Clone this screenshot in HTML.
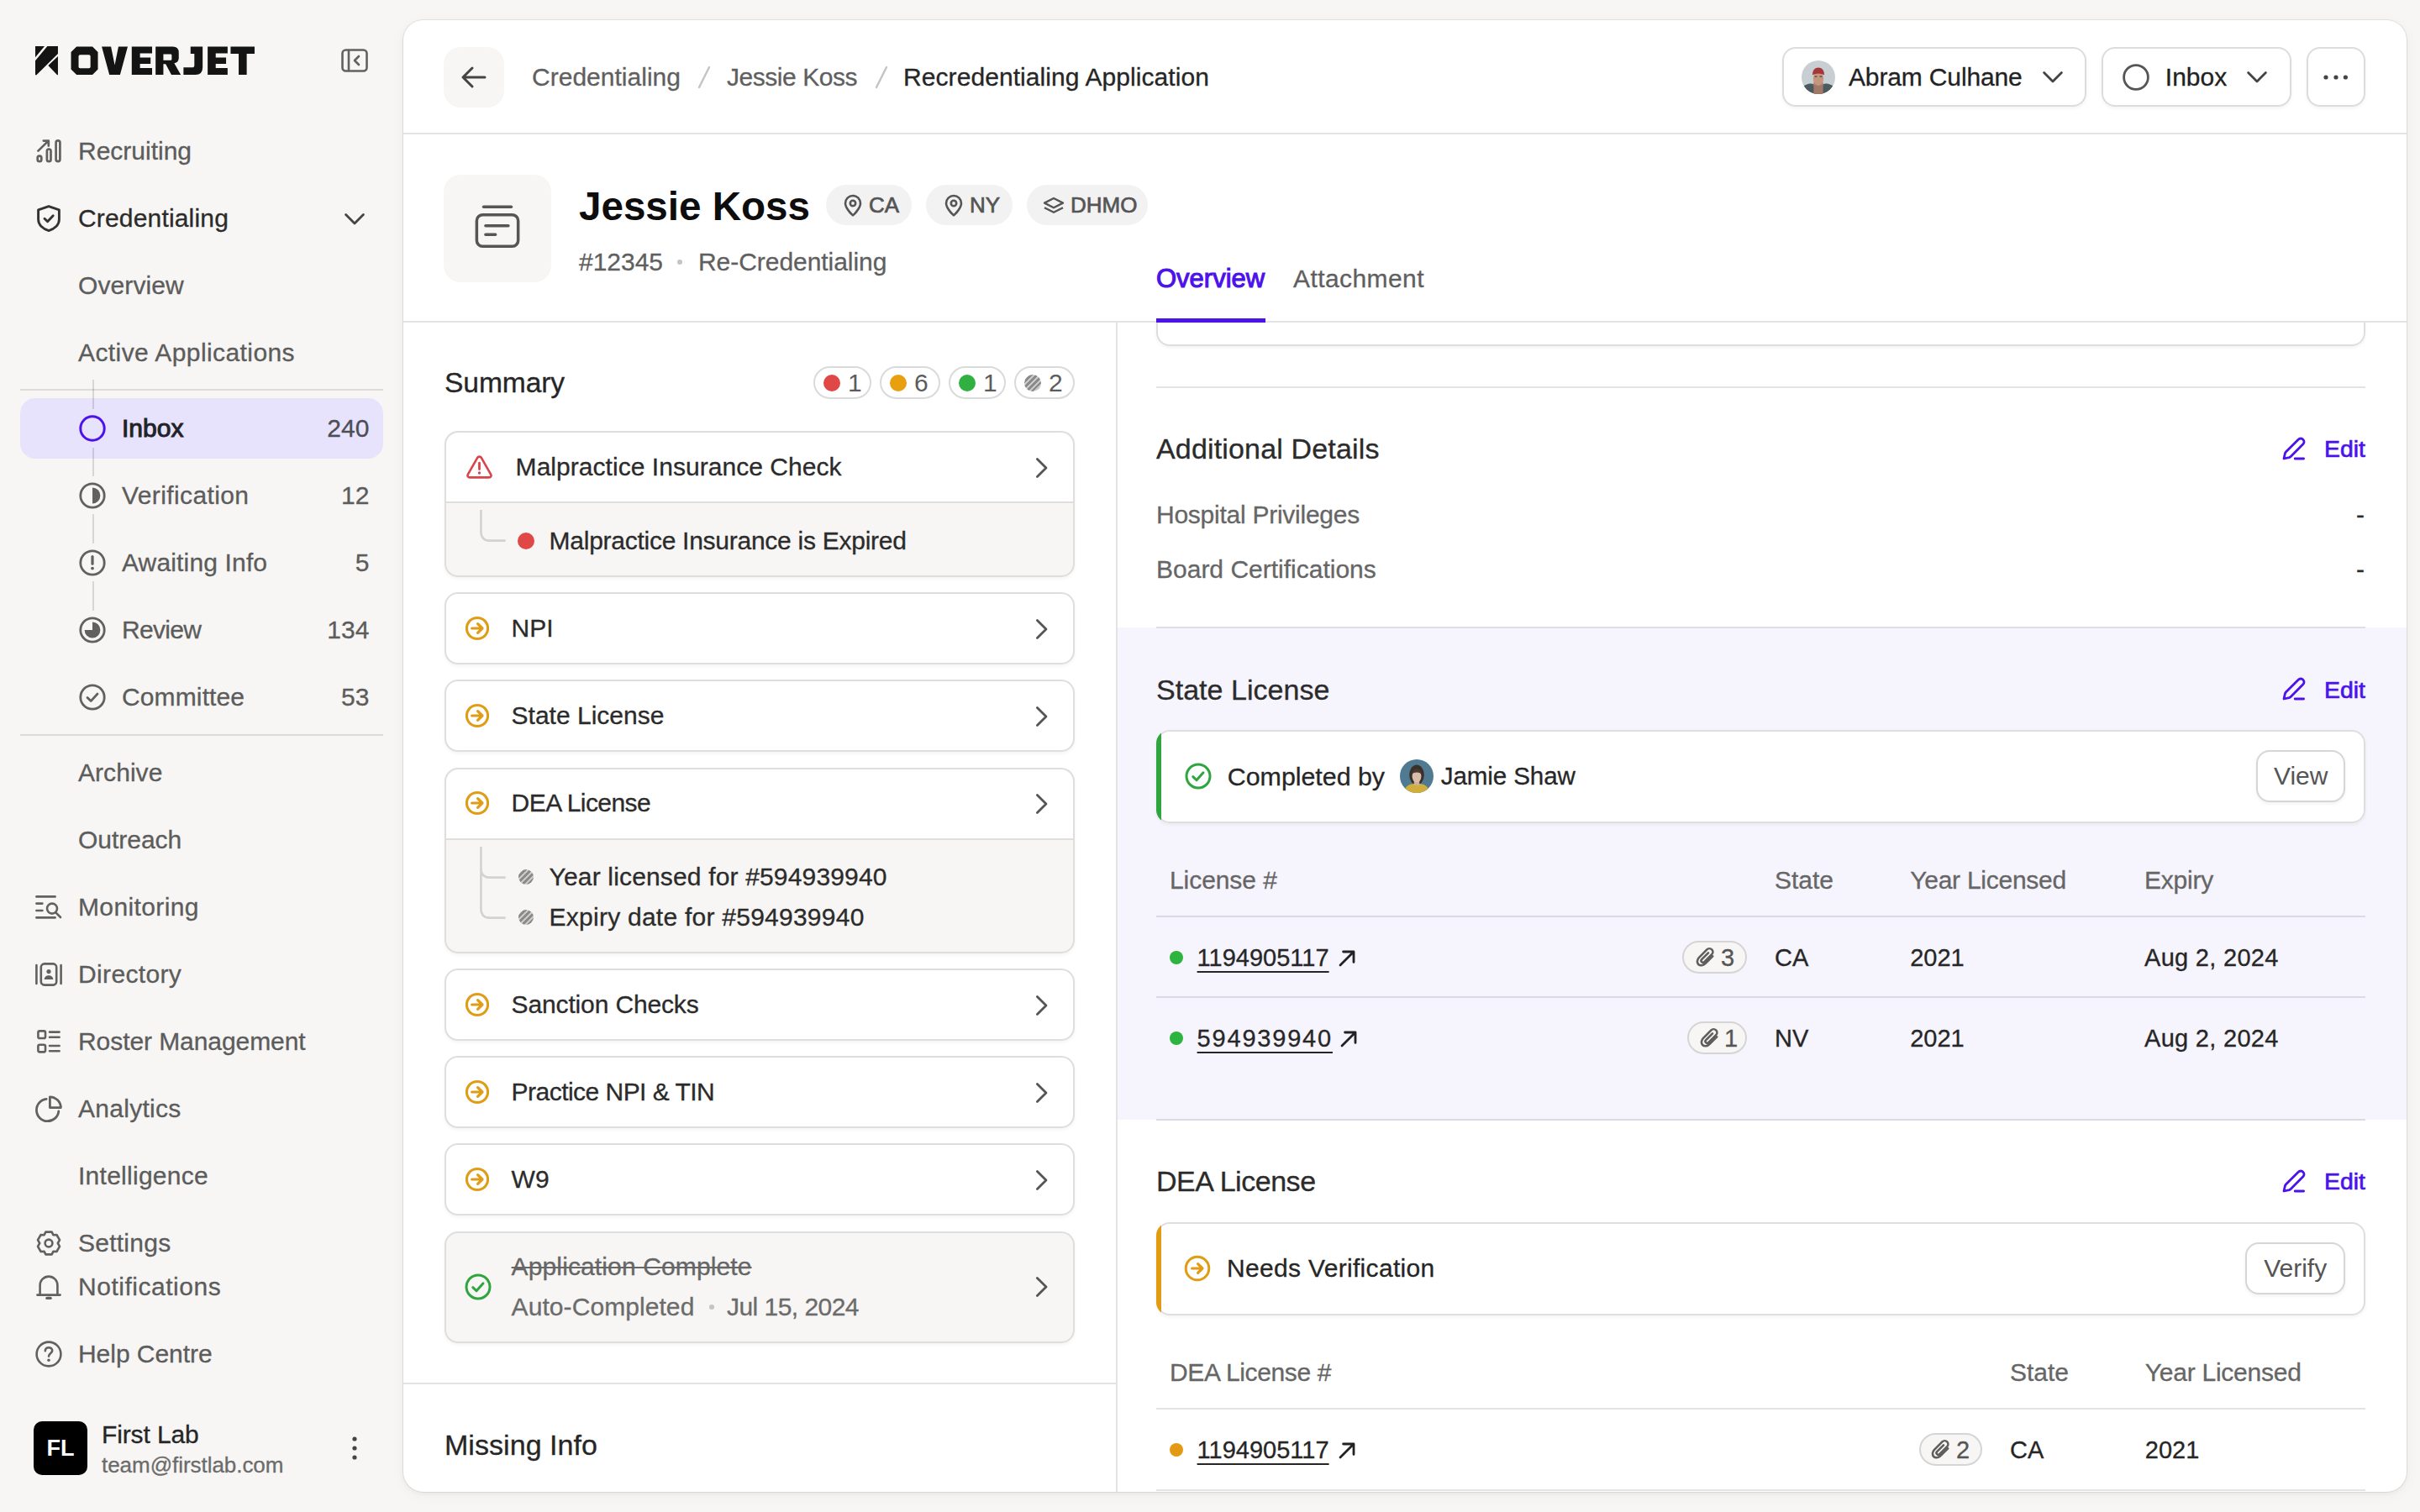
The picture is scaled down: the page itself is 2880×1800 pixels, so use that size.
<!DOCTYPE html>
<html><head><meta charset="utf-8">
<style>
*{box-sizing:border-box;margin:0;padding:0}
html,body{width:2880px;height:1800px;overflow:hidden;background:#f7f6f4}
body{font-family:"Liberation Sans",sans-serif;color:#262626}
#root{position:relative;width:1440px;height:900px;zoom:2;background:#f7f6f4;overflow:hidden}
.a{position:absolute;white-space:nowrap}
.t{position:absolute;white-space:nowrap;line-height:20px;height:20px;-webkit-text-stroke-width:0.15px}
svg{position:absolute;overflow:visible}
.nav{font-size:15px;color:#5c5c5c}
.ic{fill:none;stroke:#616161;stroke-width:1.4;stroke-linecap:round;stroke-linejoin:round}
.badge{height:19.5px;border:1px solid #dadada;border-radius:10px;background:#fff}
.badge i{position:absolute;left:5px;top:3.75px;width:10px;height:10px;border-radius:50%}
.badge span{position:absolute;left:19.5px;top:0;line-height:17.5px;font-size:15px;color:#5c5c5c}
.hatch{background:repeating-linear-gradient(135deg,#8a8a8a 0 1.3px,#c9c9c9 1.3px 2.4px)}
.card{border:1px solid #dedede;border-radius:8px;background:#fff;box-shadow:0 1px 2px rgba(0,0,0,0.05);overflow:hidden}
.item{font-size:15px;color:#2b2b2b}
.sec{font-size:17px;color:#2b2b2b}
.edit{font-size:14.2px;color:#4c12ea;-webkit-text-stroke:0.35px #4c12ea}
.th{font-size:15px;color:#666}
.td{font-size:14.5px;color:#262626}
.lnk{text-decoration:underline;text-underline-offset:3px;text-decoration-thickness:1px}
.btn{border:1px solid #d6d6d6;border-radius:8px;background:#fff;box-shadow:0 1px 2px rgba(0,0,0,0.06);font-size:15px;color:#555;text-align:center;line-height:29px}
.badge2{height:19.4px;border:1px solid #d5d5d5;border-radius:10px;background:#f7f6f4}
@media (max-width:2000px){html,body{width:1440px;height:900px}#root{zoom:1}}
</style></head><body><div id="root">

<!-- ============ SIDEBAR ============ -->
<svg style="left:15px;top:20px" width="145" height="30.02" viewBox="0 0 2420 501"><g fill="#141414">
<path d="M100 125H192L100 235Z M220 125H325V200L112 410H100V270Z M325 225V410H318L228 318Z"/>
<path fill-rule="evenodd" d="M510 130H668L722 184V354L668 408H510L455 354V184Z M545 210H633Q648 210 648 225V330Q648 345 633 345H545Q530 345 530 330V225Q530 210 545 210Z"/>
<path d="M760 130H852L889 312L926 130H1018L942 408H836Z"/>
<path d="M1058 130H1260V197H1140V238H1245V300H1140V342H1260V408H1058Z"/>
<path fill-rule="evenodd" d="M1295 130H1465Q1525 130 1525 190V245Q1525 285 1480 295L1545 408H1452L1395 303H1372V408H1295Z M1372 205H1445Q1455 205 1455 215V255Q1455 265 1445 265H1372Z"/>
<path d="M1642 130H1762V335Q1762 408 1690 408H1572V335H1666Q1680 335 1680 320V200H1642Z"/>
<path d="M1812 130H2010V197H1892V238H1995V300H1892V342H2010V408H1812Z"/>
<path d="M2040 130H2278V200H2200V408H2120V200H2040Z"/>
</g></svg>
<svg style="left:203px;top:29px" width="16" height="14" viewBox="0 0 16 14"><rect x="0.75" y="0.75" width="14.5" height="12.5" rx="2" class="ic" style="stroke-width:1.3"/><path d="M4.5 1V13M10.5 4.5L8 7L10.5 9.5" class="ic" style="stroke-width:1.3"/></svg>

<!-- Recruiting -->
<svg style="left:21.5px;top:83px" width="15" height="14" viewBox="0 0 15 14"><rect x="0.85" y="9.85" width="2.3" height="3.2" rx="1.1" class="ic" style="stroke-width:1.35"/><rect x="6.45" y="5.75" width="2.3" height="7.3" rx="1.1" class="ic" style="stroke-width:1.35"/><rect x="11.8" y="0.65" width="2.4" height="12.4" rx="1.2" class="ic" style="stroke-width:1.35"/><path d="M1.2 6.8L7.3 0.8M4.4 0.8H7.4V3.8" class="ic" style="stroke-width:1.35"/></svg>
<div class="t nav" style="letter-spacing:-0.003px;left:46.5px;top:80px">Recruiting</div>

<!-- Credentialing -->
<svg style="left:22px;top:122px" width="14" height="16" viewBox="0 0 14 16"><path d="M7 0.8L13.2 2.9V8.6C13.2 12 10.2 14.3 7 15.3C3.8 14.3 0.8 12 0.8 8.6V2.9Z" class="ic" style="stroke:#333;stroke-width:1.45"/><path d="M4.5 8.1L6.3 9.9L9.6 6.4" class="ic" style="stroke:#333;stroke-width:1.45"/></svg>
<div class="t nav" style="letter-spacing:0.085px;left:46.5px;top:120px;color:#2b2b2b">Credentialing</div>
<svg style="left:205px;top:127px" width="12" height="7" viewBox="0 0 12 7"><path d="M0.8 0.8L6 6L11.2 0.8" class="ic" style="stroke:#444"/></svg>

<div class="t nav" style="letter-spacing:0.048px;left:46.5px;top:160px">Overview</div>
<div class="t nav" style="letter-spacing:0.207px;left:46.5px;top:200px">Active Applications</div>

<div class="a" style="left:12px;top:231.5px;width:216px;height:1px;background:#dcdbd9"></div>
<div class="a" style="left:12px;top:237px;width:216px;height:36px;border-radius:9px;background:#e8e3fd"></div>
<div class="a" style="left:55px;top:226px;width:1px;height:17.5px;background:rgba(0,0,0,0.13)"></div><div class="a" style="left:55px;top:266.5px;width:1px;height:17px;background:rgba(0,0,0,0.13)"></div><div class="a" style="left:55px;top:306px;width:1px;height:17.5px;background:rgba(0,0,0,0.13)"></div><div class="a" style="left:55px;top:346px;width:1px;height:17.5px;background:rgba(0,0,0,0.13)"></div>

<!-- Inbox -->
<svg style="left:47px;top:247px" width="16" height="16" viewBox="0 0 16 16"><circle cx="8" cy="8" r="7.1" fill="#e8e3fd" stroke="#4c12ea" stroke-width="1.5"/></svg>
<div class="t nav" style="left:72.5px;top:245px;color:#222228;-webkit-text-stroke:0.5px #222228">Inbox</div>
<div class="t nav" style="right:1220.3px;top:245px;color:#4d4d55">240</div>

<!-- Verification -->
<svg style="left:47px;top:287px" width="16" height="16" viewBox="0 0 16 16"><circle cx="8" cy="8" r="7.1" fill="none" stroke="#616161" stroke-width="1.4"/><path d="M8 3.3A4.7 4.7 0 0 1 8 12.7Z" fill="#616161"/></svg>
<div class="t nav" style="letter-spacing:0.194px;left:72.5px;top:285px">Verification</div>
<div class="t nav" style="right:1220.3px;top:285px">12</div>

<!-- Awaiting -->
<svg style="left:47px;top:327px" width="16" height="16" viewBox="0 0 16 16"><circle cx="8" cy="8" r="7.1" fill="none" stroke="#616161" stroke-width="1.4"/><path d="M8 4.3V8.6" stroke="#616161" stroke-width="1.6" stroke-linecap="round"/><circle cx="8" cy="11.3" r="0.95" fill="#616161"/></svg>
<div class="t nav" style="letter-spacing:0.076px;left:72.5px;top:325px">Awaiting Info</div>
<div class="t nav" style="right:1220.3px;top:325px">5</div>

<!-- Review -->
<svg style="left:47px;top:367px" width="16" height="16" viewBox="0 0 16 16"><circle cx="8" cy="8" r="7.1" fill="none" stroke="#616161" stroke-width="1.4"/><path d="M8 3.3A4.7 4.7 0 1 1 3.3 8H8Z" fill="#616161"/></svg>
<div class="t nav" style="letter-spacing:-0.348px;left:72.5px;top:365px">Review</div>
<div class="t nav" style="right:1220.3px;top:365px">134</div>

<!-- Committee -->
<svg style="left:47px;top:407px" width="16" height="16" viewBox="0 0 16 16"><circle cx="8" cy="8" r="7.1" fill="#f7f6f4" stroke="#616161" stroke-width="1.4"/><path d="M5 8.2L7.1 10.3L11 6" fill="none" stroke="#616161" stroke-width="1.4" stroke-linecap="round" stroke-linejoin="round"/></svg>
<div class="t nav" style="letter-spacing:0.064px;left:72.5px;top:405px">Committee</div>
<div class="t nav" style="right:1220.3px;top:405px">53</div>

<div class="a" style="left:12px;top:437px;width:216px;height:1px;background:#dcdbd9"></div>

<div class="t nav" style="letter-spacing:0.025px;left:46.5px;top:450px">Archive</div>
<div class="t nav" style="letter-spacing:-0.013px;left:46.5px;top:490px">Outreach</div>

<!-- Monitoring -->
<svg style="left:21px;top:533px" width="16" height="14" viewBox="0 0 16 14"><path d="M0.7 0.7H11.8M0.7 4.8H4.2M0.7 9H4.2M0.7 13.2H11.8M12.2 10.2L15 13" class="ic" style="stroke-width:1.3"/><circle cx="10" cy="7.8" r="3" class="ic" style="stroke-width:1.3"/></svg>
<div class="t nav" style="letter-spacing:0.186px;left:46.5px;top:530px">Monitoring</div>

<!-- Directory -->
<svg style="left:21px;top:573px" width="16" height="14" viewBox="0 0 16 14"><path d="M0.7 1.5V12.5M15.3 1.5V12.5" class="ic" style="stroke-width:1.3"/><rect x="3.4" y="0.7" width="9.2" height="12.6" rx="2" class="ic" style="stroke-width:1.3"/><circle cx="8" cy="5.3" r="1.3" fill="#616161"/><path d="M5.3 10C5.6 8.2 6.7 7.6 8 7.6C9.3 7.6 10.4 8.2 10.7 10Z" fill="#616161"/></svg>
<div class="t nav" style="letter-spacing:0.177px;left:46.5px;top:570px">Directory</div>

<!-- Roster -->
<svg style="left:22px;top:613px" width="14" height="14" viewBox="0 0 14 14"><rect x="0.7" y="0.7" width="4.3" height="4.3" rx="0.9" class="ic" style="stroke-width:1.3"/><rect x="0.7" y="8.9" width="4.3" height="4.3" rx="0.9" class="ic" style="stroke-width:1.3"/><path d="M7.5 1.3H13.3M7.5 4.4H13.3M7.5 9.5H13.3M7.5 12.6H13.3" class="ic" style="stroke-width:1.3"/></svg>
<div class="t nav" style="letter-spacing:-0.036px;left:46.5px;top:610px">Roster Management</div>

<!-- Analytics -->
<svg style="left:21px;top:652px" width="16" height="16" viewBox="0 0 16 16"><path d="M6.6 2.2A6.6 6.6 0 1 0 13.9 9.4" class="ic" style="stroke-width:1.4"/><path d="M8.7 0.9A6.6 6.6 0 0 1 15.2 7.3H8.7Z" class="ic" style="stroke-width:1.4"/></svg>
<div class="t nav" style="letter-spacing:0.142px;left:46.5px;top:650px">Analytics</div>

<div class="t nav" style="letter-spacing:0.134px;left:46.5px;top:690px">Intelligence</div>

<!-- Settings -->
<svg style="left:21px;top:732.5px" width="16" height="15" viewBox="0 0 16 15"><path d="M6.2 0.8H9.8L10.7 2.6L12.7 2.5L14.5 5.6L13.4 7.5L14.5 9.4L12.7 12.5L10.7 12.4L9.8 14.2H6.2L5.3 12.4L3.3 12.5L1.5 9.4L2.6 7.5L1.5 5.6L3.3 2.5L5.3 2.6Z" class="ic" style="stroke-width:1.3"/><circle cx="8" cy="7.5" r="2.2" class="ic" style="stroke-width:1.3"/></svg>
<div class="t nav" style="letter-spacing:0.125px;left:46.5px;top:730px">Settings</div>

<!-- Bell -->
<svg style="left:21px;top:758px" width="16" height="16" viewBox="0 0 16 16"><path d="M1.2 12.8H14.8M2.8 12.8V7A5.2 5.2 0 0 1 13.2 7V12.8" class="ic" style="stroke-width:1.3"/><path d="M6.9 14.7H9.1" class="ic" style="stroke-width:1.6"/></svg>
<div class="t nav" style="letter-spacing:0.261px;left:46.5px;top:756px">Notifications</div>

<!-- Help -->
<svg style="left:21px;top:798px" width="16" height="16" viewBox="0 0 16 16"><circle cx="8" cy="8" r="7.2" class="ic" style="stroke-width:1.3"/><path d="M5.9 6.1C5.9 4.9 6.8 4.1 8 4.1C9.2 4.1 10.1 4.9 10.1 6C10.1 7.4 8 7.6 8 9.3" class="ic" style="stroke-width:1.3"/><circle cx="8" cy="11.6" r="0.9" fill="#616161"/></svg>
<div class="t nav" style="letter-spacing:-0.022px;left:46.5px;top:796px">Help Centre</div>

<!-- User -->
<div class="a" style="left:20px;top:846px;width:32px;height:32px;border-radius:5px;background:#000;color:#fff;font-weight:bold;font-size:13.5px;line-height:32px;text-align:center">FL</div>
<div class="t" style="letter-spacing:-0.062px;left:60.5px;top:844px;font-size:15px;color:#262626">First Lab</div>
<div class="t" style="letter-spacing:-0.021px;left:60.5px;top:862px;font-size:13px;color:#6b6b6b">team@firstlab.com</div>
<svg style="left:209.5px;top:855px" width="3" height="14" viewBox="0 0 3 14"><circle cx="1.5" cy="1.5" r="1.3" fill="#444"/><circle cx="1.5" cy="7" r="1.3" fill="#444"/><circle cx="1.5" cy="12.5" r="1.3" fill="#444"/></svg>

<!-- ============ MAIN PANEL ============ -->
<div class="a" id="panel" style="left:240px;top:12px;width:1192px;height:876px;background:#fff;border-radius:12px;box-shadow:0 0 0 0.5px rgba(0,0,0,0.07),0 1px 3px rgba(0,0,0,0.05),0 2px 10px rgba(0,0,0,0.035);overflow:hidden">
<!-- coordinates inside panel: subtract (240,12) -->
<!-- header -->
<div class="a" style="left:0;top:67px;width:1192px;height:1px;background:#e3e3e3"></div>
<div class="a" style="left:24px;top:16px;width:36px;height:36px;border-radius:10px;background:#f7f6f4"></div>
<svg style="left:34px;top:27px" width="16" height="14" viewBox="0 0 16 14"><path d="M1.5 7H14.5M7 1.5L1.5 7L7 12.5" fill="none" stroke="#444" stroke-width="1.5" stroke-linecap="round" stroke-linejoin="round"/></svg>
<div class="t" style="letter-spacing:0.008px;left:76.5px;top:24px;font-size:15px;color:#5f5f5f">Credentialing</div>
<svg style="left:175px;top:27px" width="8" height="14" viewBox="0 0 8 14"><path d="M7 1L1 13" stroke="#c4c4c4" stroke-width="1.2" stroke-linecap="round"/></svg>
<div class="t" style="letter-spacing:-0.231px;left:192.5px;top:24px;font-size:15px;color:#5f5f5f">Jessie Koss</div>
<svg style="left:280.5px;top:27px" width="8" height="14" viewBox="0 0 8 14"><path d="M7 1L1 13" stroke="#c4c4c4" stroke-width="1.2" stroke-linecap="round"/></svg>
<div class="t" style="letter-spacing:0.039px;left:297.5px;top:24px;font-size:15px;color:#262626">Recredentialing Application</div>

<!-- header buttons -->
<div class="a" style="left:820.5px;top:16px;width:181px;height:35.5px;border:1px solid #dcdcdc;border-radius:8px;box-shadow:0 1px 2px rgba(0,0,0,0.05)"></div>
<svg style="left:832px;top:24px" width="20" height="20" viewBox="0 0 20 20"><defs><clipPath id="ca"><circle cx="10" cy="10" r="10"/></clipPath></defs><g clip-path="url(#ca)"><rect width="20" height="20" fill="#c8cfd3"/><path d="M0 16Q4 13 7 14L10 20H0Z M20 16Q16 13 13 14L10 20H20Z" fill="#4a5a5e"/><rect x="7.2" y="13" width="5.6" height="8" fill="#a27866"/><ellipse cx="10" cy="10.8" rx="3.1" ry="4.2" fill="#c4967f"/><path d="M6.4 8.6Q6.6 4.2 10 4.2Q13.4 4.2 13.6 8.6Q10 7 6.4 8.6Z" fill="#a53538"/><path d="M7.8 9.6H9.2M10.8 9.6H12.2" stroke="#5a3a30" stroke-width="0.6"/></g></svg>
<div class="t" style="letter-spacing:-0.071px;left:860px;top:24px;font-size:15px;color:#222">Abram Culhane</div>
<svg style="left:975.5px;top:30.5px" width="12" height="7" viewBox="0 0 12 7"><path d="M0.8 0.8L6 6L11.2 0.8" fill="none" stroke="#444" stroke-width="1.4" stroke-linecap="round" stroke-linejoin="round"/></svg>
<div class="a" style="left:1010.5px;top:16px;width:113px;height:35.5px;border:1px solid #dcdcdc;border-radius:8px;box-shadow:0 1px 2px rgba(0,0,0,0.05)"></div>
<svg style="left:1023px;top:26px" width="16" height="16" viewBox="0 0 16 16"><circle cx="8" cy="8" r="7.2" fill="none" stroke="#555" stroke-width="1.4"/></svg>
<div class="t" style="left:1048.4px;top:24px;font-size:15px;color:#222">Inbox</div>
<svg style="left:1097px;top:30.5px" width="12" height="7" viewBox="0 0 12 7"><path d="M0.8 0.8L6 6L11.2 0.8" fill="none" stroke="#444" stroke-width="1.4" stroke-linecap="round" stroke-linejoin="round"/></svg>
<div class="a" style="left:1132.5px;top:16px;width:35px;height:35.5px;border:1px solid #dcdcdc;border-radius:8px;box-shadow:0 1px 2px rgba(0,0,0,0.05)"></div>
<svg style="left:1142.5px;top:32.5px" width="15" height="3" viewBox="0 0 15 3"><circle cx="1.5" cy="1.5" r="1.3" fill="#444"/><circle cx="7.5" cy="1.5" r="1.3" fill="#444"/><circle cx="13.2" cy="1.5" r="1.3" fill="#444"/></svg>

<!-- profile -->
<div class="a" style="left:24px;top:92px;width:64px;height:64px;border-radius:10px;background:#f7f6f4"></div>
<svg style="left:42.5px;top:110px" width="27" height="27" viewBox="0 0 23 23"><path d="M4.5 1H18.5" fill="none" stroke="#555" stroke-width="1.5" stroke-linecap="round"/><rect x="1" y="5" width="21" height="16" rx="3" fill="none" stroke="#555" stroke-width="1.5"/><path d="M5.5 10.5H17M5.5 15H10.5" fill="none" stroke="#555" stroke-width="1.5" stroke-linecap="round"/></svg>
<div class="a" style="letter-spacing:-0.009px;left:104.5px;top:96px;font-size:23.8px;font-weight:bold;color:#0d0d0d;line-height:30px">Jessie Koss</div>
<div class="a" style="left:251.5px;top:98px;width:51px;height:24px;border-radius:12px;background:#f2f2f2"></div>
<svg style="left:262px;top:104px" width="11" height="13" viewBox="0 0 11 13"><path d="M5.5 12.2C5.5 12.2 1 8.2 1 5A4.5 4.5 0 0 1 10 5C10 8.2 5.5 12.2 5.5 12.2Z" fill="none" stroke="#555" stroke-width="1.3" stroke-linejoin="round"/><circle cx="5.5" cy="5" r="1.6" fill="none" stroke="#555" stroke-width="1.3"/></svg>
<div class="t" style="left:277px;top:100px;font-size:13px;color:#555;-webkit-text-stroke:0.35px #555">CA</div>
<div class="a" style="left:311px;top:98px;width:51.5px;height:24px;border-radius:12px;background:#f2f2f2"></div>
<svg style="left:322px;top:104px" width="11" height="13" viewBox="0 0 11 13"><path d="M5.5 12.2C5.5 12.2 1 8.2 1 5A4.5 4.5 0 0 1 10 5C10 8.2 5.5 12.2 5.5 12.2Z" fill="none" stroke="#555" stroke-width="1.3" stroke-linejoin="round"/><circle cx="5.5" cy="5" r="1.6" fill="none" stroke="#555" stroke-width="1.3"/></svg>
<div class="t" style="left:337px;top:100px;font-size:13px;color:#555;-webkit-text-stroke:0.35px #555">NY</div>
<div class="a" style="left:371px;top:98px;width:72px;height:24px;border-radius:12px;background:#f2f2f2"></div>
<svg style="left:380.5px;top:105px" width="13" height="11" viewBox="0 0 13 11"><path d="M6.5 1L12 3.8L6.5 6.6L1 3.8Z" fill="none" stroke="#555" stroke-width="1.2" stroke-linejoin="round"/><path d="M1 6.6L6.5 9.4L12 6.6" fill="none" stroke="#555" stroke-width="1.2" stroke-linejoin="round"/></svg>
<div class="t" style="left:397px;top:100px;font-size:13px;color:#555;-webkit-text-stroke:0.35px #555">DHMO</div>
<div class="t" style="letter-spacing:-0.009px;left:104.5px;top:134px;font-size:15px;color:#5f5f5f">#12345</div>
<div class="a" style="left:163px;top:142.5px;width:3px;height:3px;border-radius:50%;background:#c4c4c4"></div>
<div class="t" style="letter-spacing:-0.023px;left:175.5px;top:134px;font-size:15px;color:#5f5f5f">Re-Credentialing</div>

<!-- tabs -->
<div class="t" style="left:448px;top:144px;font-size:15.5px;color:#4c12ea;-webkit-text-stroke:0.55px #4c12ea">Overview</div>
<div class="t" style="left:529.5px;top:144px;font-size:15px;color:#5f5f5f;letter-spacing:0.212px">Attachment</div>
<div class="a" style="left:0;top:179px;width:1192px;height:1px;background:#e3e3e3"></div>
<div class="a" style="left:448px;top:177.5px;width:65px;height:2.5px;background:#4c12ea"></div>

<!-- column separator -->
<div class="a" style="left:424px;top:180px;width:1px;height:700px;background:#e3e3e3"></div>


<!-- ===== LEFT COLUMN ===== -->
<div class="t" style="letter-spacing:-0.048px;left:24.5px;top:206px;font-size:16.8px;color:#262626">Summary</div>
<div class="a badge" style="left:244px;top:206.2px;width:34.5px"><i style="background:#e04848"></i><span>1</span></div>
<div class="a badge" style="left:283.5px;top:206.2px;width:36px"><i style="background:#e8a010"></i><span>6</span></div>
<div class="a badge" style="left:324.5px;top:206.2px;width:34px"><i style="background:#30b040"></i><span>1</span></div>
<div class="a badge" style="left:363.5px;top:206.2px;width:36px"><i class="hatch"></i><span>2</span></div>

<!-- card 1 -->
<div class="a card" style="left:24.5px;top:244.5px;width:375px;height:87px;background:#f7f6f4"></div>
<div class="a" style="left:25.5px;top:245.5px;width:373px;height:42px;background:#fff;border-radius:8px 8px 0 0;border-bottom:1px solid #dedede"></div>
<svg style="left:37.3px;top:259px" width="15.5" height="14" viewBox="0 0 15.5 14"><path d="M6.6 1.4C7.1 0.6 8.4 0.6 8.9 1.4L14.6 11.4C15.1 12.3 14.5 13.2 13.5 13.2H2C1 13.2 0.4 12.3 0.9 11.4Z" fill="none" stroke="#d9434a" stroke-width="1.3" stroke-linejoin="round"/><path d="M7.75 4.6V8.3" stroke="#d9434a" stroke-width="1.4" stroke-linecap="round"/><circle cx="7.75" cy="10.5" r="0.85" fill="#d9434a"/></svg>
<div class="t item" style="letter-spacing:0.021px;left:66.8px;top:256px">Malpractice Insurance Check</div>
<svg class="chev" style="left:376px;top:260px" width="8" height="13" viewBox="0 0 8 13"><path d="M1.2 1.2L6.5 6.5L1.2 11.8" fill="none" stroke="#555" stroke-width="1.4" stroke-linecap="round" stroke-linejoin="round"/></svg>
<svg style="left:45.3px;top:291.5px" width="16" height="19" viewBox="0 0 16 19"><path d="M0.7 0V13.3C0.7 16 2.3 18.3 5.5 18.3H15.3" fill="none" stroke="#d2d2d2" stroke-width="1.3"/></svg>
<div class="a" style="left:68px;top:305px;width:10px;height:10px;border-radius:50%;background:#e04848"></div>
<div class="t item" style="letter-spacing:-0.133px;left:86.8px;top:300px">Malpractice Insurance is Expired</div>

<!-- NPI -->
<div class="a card" style="left:24.5px;top:340.5px;width:375px;height:43px"></div>
<svg class="arr" style="left:36px;top:354px" width="16" height="16" viewBox="0 0 16 16"><circle cx="8" cy="8" r="6.3" fill="none" stroke="#e09c12" stroke-width="1.5"/><path d="M4.8 8H11M8.3 5.3L11 8L8.3 10.7" fill="none" stroke="#e09c12" stroke-width="1.6" stroke-linecap="round" stroke-linejoin="round"/></svg>
<div class="t item" style="left:64.3px;top:352px">NPI</div>
<svg class="chev" style="left:376px;top:356px" width="8" height="13" viewBox="0 0 8 13"><path d="M1.2 1.2L6.5 6.5L1.2 11.8" fill="none" stroke="#555" stroke-width="1.4" stroke-linecap="round" stroke-linejoin="round"/></svg>

<!-- State License -->
<div class="a card" style="left:24.5px;top:392.5px;width:375px;height:43px"></div>
<svg class="arr" style="left:36px;top:406px" width="16" height="16" viewBox="0 0 16 16"><circle cx="8" cy="8" r="6.3" fill="none" stroke="#e09c12" stroke-width="1.5"/><path d="M4.8 8H11M8.3 5.3L11 8L8.3 10.7" fill="none" stroke="#e09c12" stroke-width="1.6" stroke-linecap="round" stroke-linejoin="round"/></svg>
<div class="t item" style="letter-spacing:0.0px;left:64.3px;top:404px">State License</div>
<svg class="chev" style="left:376px;top:408px" width="8" height="13" viewBox="0 0 8 13"><path d="M1.2 1.2L6.5 6.5L1.2 11.8" fill="none" stroke="#555" stroke-width="1.4" stroke-linecap="round" stroke-linejoin="round"/></svg>

<!-- DEA License -->
<div class="a card" style="left:24.5px;top:445px;width:375px;height:110.5px;background:#f7f6f4"></div>
<div class="a" style="left:25.5px;top:446px;width:373px;height:42px;background:#fff;border-radius:8px 8px 0 0;border-bottom:1px solid #dedede"></div>
<svg class="arr" style="left:36px;top:458px" width="16" height="16" viewBox="0 0 16 16"><circle cx="8" cy="8" r="6.3" fill="none" stroke="#e09c12" stroke-width="1.5"/><path d="M4.8 8H11M8.3 5.3L11 8L8.3 10.7" fill="none" stroke="#e09c12" stroke-width="1.6" stroke-linecap="round" stroke-linejoin="round"/></svg>
<div class="t item" style="letter-spacing:-0.281px;left:64.3px;top:456px">DEA License</div>
<svg class="chev" style="left:376px;top:460px" width="8" height="13" viewBox="0 0 8 13"><path d="M1.2 1.2L6.5 6.5L1.2 11.8" fill="none" stroke="#555" stroke-width="1.4" stroke-linecap="round" stroke-linejoin="round"/></svg>
<svg style="left:45.3px;top:492px" width="16" height="43" viewBox="0 0 16 43"><path d="M0.7 0V37.3C0.7 40 2.3 42.3 5.5 42.3H15.3M0.7 13.5C0.7 16 2.3 18.3 5.5 18.3H15.3" fill="none" stroke="#d2d2d2" stroke-width="1.3"/></svg>
<i class="a hatch" style="left:68.5px;top:505.5px;width:9px;height:9px;border-radius:50%"></i>
<div class="t item" style="letter-spacing:0.08px;left:86.8px;top:500px">Year licensed for #594939940</div>
<i class="a hatch" style="left:68.5px;top:529.5px;width:9px;height:9px;border-radius:50%"></i>
<div class="t item" style="letter-spacing:0.123px;left:86.8px;top:524px">Expiry date for #594939940</div>

<!-- Sanction -->
<div class="a card" style="left:24.5px;top:564.5px;width:375px;height:43px"></div>
<svg class="arr" style="left:36px;top:578px" width="16" height="16" viewBox="0 0 16 16"><circle cx="8" cy="8" r="6.3" fill="none" stroke="#e09c12" stroke-width="1.5"/><path d="M4.8 8H11M8.3 5.3L11 8L8.3 10.7" fill="none" stroke="#e09c12" stroke-width="1.6" stroke-linecap="round" stroke-linejoin="round"/></svg>
<div class="t item" style="letter-spacing:-0.071px;left:64.3px;top:576px">Sanction Checks</div>
<svg class="chev" style="left:376px;top:580px" width="8" height="13" viewBox="0 0 8 13"><path d="M1.2 1.2L6.5 6.5L1.2 11.8" fill="none" stroke="#555" stroke-width="1.4" stroke-linecap="round" stroke-linejoin="round"/></svg>

<!-- Practice -->
<div class="a card" style="left:24.5px;top:616.5px;width:375px;height:43px"></div>
<svg class="arr" style="left:36px;top:630px" width="16" height="16" viewBox="0 0 16 16"><circle cx="8" cy="8" r="6.3" fill="none" stroke="#e09c12" stroke-width="1.5"/><path d="M4.8 8H11M8.3 5.3L11 8L8.3 10.7" fill="none" stroke="#e09c12" stroke-width="1.6" stroke-linecap="round" stroke-linejoin="round"/></svg>
<div class="t item" style="letter-spacing:-0.266px;left:64.3px;top:628px">Practice NPI &amp; TIN</div>
<svg class="chev" style="left:376px;top:632px" width="8" height="13" viewBox="0 0 8 13"><path d="M1.2 1.2L6.5 6.5L1.2 11.8" fill="none" stroke="#555" stroke-width="1.4" stroke-linecap="round" stroke-linejoin="round"/></svg>

<!-- W9 -->
<div class="a card" style="left:24.5px;top:668.5px;width:375px;height:43px"></div>
<svg class="arr" style="left:36px;top:682px" width="16" height="16" viewBox="0 0 16 16"><circle cx="8" cy="8" r="6.3" fill="none" stroke="#e09c12" stroke-width="1.5"/><path d="M4.8 8H11M8.3 5.3L11 8L8.3 10.7" fill="none" stroke="#e09c12" stroke-width="1.6" stroke-linecap="round" stroke-linejoin="round"/></svg>
<div class="t item" style="left:64.3px;top:680px">W9</div>
<svg class="chev" style="left:376px;top:684px" width="8" height="13" viewBox="0 0 8 13"><path d="M1.2 1.2L6.5 6.5L1.2 11.8" fill="none" stroke="#555" stroke-width="1.4" stroke-linecap="round" stroke-linejoin="round"/></svg>

<!-- App complete -->
<div class="a card" style="left:24.5px;top:721px;width:375px;height:66.5px;background:#f7f6f4"></div>
<svg style="left:36.5px;top:746px" width="16" height="16" viewBox="0 0 16 16"><circle cx="8" cy="8" r="7" fill="none" stroke="#2fa53f" stroke-width="1.5"/><path d="M4.9 8.3L7 10.4L11 5.9" fill="none" stroke="#2fa53f" stroke-width="1.5" stroke-linecap="round" stroke-linejoin="round"/></svg>
<div class="t item" style="letter-spacing:0.062px;left:64.3px;top:732px;color:#666;text-decoration:line-through;text-decoration-thickness:1px">Application Complete</div>
<div class="t item" style="letter-spacing:0.036px;left:64.3px;top:756px;color:#6b6b6b">Auto-Completed</div>
<div class="a" style="left:182px;top:764.5px;width:3px;height:3px;border-radius:50%;background:#c4c4c4"></div>
<div class="t item" style="letter-spacing:-0.27px;left:192.5px;top:756px;color:#6b6b6b">Jul 15, 2024</div>
<svg class="chev" style="left:376px;top:747.5px" width="8" height="13" viewBox="0 0 8 13"><path d="M1.2 1.2L6.5 6.5L1.2 11.8" fill="none" stroke="#555" stroke-width="1.4" stroke-linecap="round" stroke-linejoin="round"/></svg>

<div class="a" style="left:0;top:811px;width:424px;height:1px;background:#e3e3e3"></div>
<div class="t" style="letter-spacing:0.025px;left:24.5px;top:838px;font-size:17px;color:#262626">Missing Info</div>


<!-- ===== RIGHT COLUMN ===== -->
<div class="a" style="left:425px;top:180px;width:767px;height:700px;overflow:hidden">
 <div class="a" style="left:23px;top:-38.5px;width:719.5px;height:52.5px;border:1px solid #dedede;border-radius:8px;box-shadow:0 1px 2px rgba(0,0,0,0.05)"></div>
</div>
<div class="a" style="left:448px;top:218px;width:719.5px;height:1px;background:#e3e3e3"></div>
<div class="t sec" style="letter-spacing:0.08px;left:448px;top:245px">Additional Details</div>
<svg style="left:1118px;top:248px" width="14" height="14" viewBox="0 0 14 14"><path d="M1 13L1.7 9.9C1.8 9.5 2 9.2 2.3 8.9L9.6 1.6C10.4 0.8 11.7 0.8 12.4 1.6C13.2 2.4 13.2 3.6 12.4 4.4L5.1 11.7C4.8 12 4.5 12.2 4.1 12.3Z M7.6 13H12.8" fill="none" stroke="#4c12ea" stroke-width="1.4" stroke-linecap="round" stroke-linejoin="round"/></svg>
<div class="t edit" style="left:1143px;top:245px">Edit</div>
<div class="t item" style="letter-spacing:-0.126px;left:448px;top:284.7px;color:#666">Hospital Privileges</div>
<div class="t item" style="right:25px;top:284.7px">-</div>
<div class="t item" style="letter-spacing:0.0px;left:448px;top:317px;color:#666">Board Certifications</div>
<div class="t item" style="right:25px;top:317px">-</div>

<!-- lavender state license section -->
<div class="a" style="left:425px;top:361.5px;width:767px;height:293px;background:#f6f4fd"></div>
<div class="a" style="left:448px;top:361px;width:719.5px;height:1px;background:#e0dde8"></div>
<div class="t sec" style="letter-spacing:0.014px;left:448px;top:388.7px">State License</div>
<svg style="left:1118px;top:391px" width="14" height="14" viewBox="0 0 14 14"><path d="M1 13L1.7 9.9C1.8 9.5 2 9.2 2.3 8.9L9.6 1.6C10.4 0.8 11.7 0.8 12.4 1.6C13.2 2.4 13.2 3.6 12.4 4.4L5.1 11.7C4.8 12 4.5 12.2 4.1 12.3Z M7.6 13H12.8" fill="none" stroke="#4c12ea" stroke-width="1.4" stroke-linecap="round" stroke-linejoin="round"/></svg>
<div class="t edit" style="left:1143px;top:388.7px">Edit</div>
<div class="a" style="left:448px;top:422.3px;width:719.5px;height:55.5px;border-radius:8px;background:#fff;box-shadow:inset 0 0 0 1px #dedede,0 1px 2px rgba(0,0,0,0.05);overflow:hidden"><div class="a" style="left:0;top:0;width:3px;height:100%;background:#2fa53f"></div></div>
<svg style="left:465px;top:442px" width="16" height="16" viewBox="0 0 16 16"><circle cx="8" cy="8" r="7" fill="none" stroke="#2fa53f" stroke-width="1.5"/><path d="M4.9 8.3L7 10.4L11 5.9" fill="none" stroke="#2fa53f" stroke-width="1.5" stroke-linecap="round" stroke-linejoin="round"/></svg>
<div class="t item" style="letter-spacing:-0.013px;left:490.4px;top:440px;color:#262626;font-size:15.2px">Completed by</div>
<svg style="left:593px;top:440px" width="20" height="20" viewBox="0 0 20 20"><defs><clipPath id="cj"><circle cx="10" cy="10" r="10"/></clipPath></defs><g clip-path="url(#cj)"><rect width="20" height="20" fill="#4f7a92"/><ellipse cx="10" cy="9.3" rx="4.4" ry="6" fill="#3b3029"/><path d="M2 20Q3 15 8 14.5H12Q17 15 18 20Z" fill="#cfae3c"/><rect x="8.4" y="12" width="3.2" height="3.5" fill="#cfae9a"/><ellipse cx="10" cy="10.2" rx="2.7" ry="3.6" fill="#d8bcac"/><path d="M7.3 8.4Q8 5.5 10 5.6Q12.5 5.6 12.7 8.6Q11 7 7.3 8.4Z" fill="#4a3a30"/></g></svg>
<div class="t item" style="letter-spacing:-0.06px;left:617.4px;top:440px;color:#262626;font-size:14.8px">Jamie Shaw</div>
<div class="a btn" style="left:1102.6px;top:434.4px;width:53px;height:31.2px">View</div>

<div class="t th" style="letter-spacing:-0.035px;left:456px;top:502px">License #</div>
<div class="t th" style="left:816px;top:502px">State</div>
<div class="t th" style="letter-spacing:-0.125px;left:896.6px;top:502px">Year Licensed</div>
<div class="t th" style="letter-spacing:-0.113px;left:1036px;top:502px">Expiry</div>
<div class="a" style="left:448px;top:533px;width:719.5px;height:1px;background:#dcd9e6"></div>

<div class="a" style="left:456px;top:554px;width:8px;height:8px;border-radius:50%;background:#2fb33f"></div>
<div class="t td lnk" style="left:472.3px;top:548px">1194905117</div>
<svg style="left:556.3px;top:553.3px" width="10" height="10" viewBox="0 0 10 10"><path d="M1 9L9 1M2.8 1H9V7.2" fill="none" stroke="#222" stroke-width="1.4" stroke-linecap="round" stroke-linejoin="round"/></svg>
<div class="a badge2" style="left:761.2px;top:548.2px;width:38.5px"></div>
<svg style="left:769.5px;top:552px" width="11" height="12" viewBox="0 0 11 12"><path d="M9.6 5.2L5.2 9.6C3.9 10.9 2 10.9 1.1 10C0.2 9.1 0.2 7.2 1.5 5.9L6.2 1.2C7 0.4 8.3 0.4 9.1 1.2C9.9 2 9.9 3.3 9.1 4.1L4.6 8.6C4.2 9 3.5 9 3.1 8.6C2.7 8.2 2.7 7.5 3.1 7.1L7 3.2" fill="none" stroke="#5e5e5e" stroke-width="1.3" stroke-linecap="round" stroke-linejoin="round"/></svg>
<div class="t td" style="left:784px;top:548px;color:#555">3</div>
<div class="t td" style="left:816px;top:548px">CA</div>
<div class="t td" style="left:896.6px;top:548px">2021</div>
<div class="t td" style="left:1036px;top:548px;letter-spacing:0.15px">Aug 2, 2024</div>
<div class="a" style="left:448px;top:581px;width:719.5px;height:1px;background:#dcd9e6"></div>

<div class="a" style="left:456px;top:602px;width:8px;height:8px;border-radius:50%;background:#2fb33f"></div>
<div class="t td lnk" style="left:472.3px;top:596px;letter-spacing:0.9px">594939940</div>
<svg style="left:557.5px;top:601.3px" width="10" height="10" viewBox="0 0 10 10"><path d="M1 9L9 1M2.8 1H9V7.2" fill="none" stroke="#222" stroke-width="1.4" stroke-linecap="round" stroke-linejoin="round"/></svg>
<div class="a badge2" style="left:764px;top:596.2px;width:35.7px"></div>
<svg style="left:772px;top:600px" width="11" height="12" viewBox="0 0 11 12"><path d="M9.6 5.2L5.2 9.6C3.9 10.9 2 10.9 1.1 10C0.2 9.1 0.2 7.2 1.5 5.9L6.2 1.2C7 0.4 8.3 0.4 9.1 1.2C9.9 2 9.9 3.3 9.1 4.1L4.6 8.6C4.2 9 3.5 9 3.1 8.6C2.7 8.2 2.7 7.5 3.1 7.1L7 3.2" fill="none" stroke="#5e5e5e" stroke-width="1.3" stroke-linecap="round" stroke-linejoin="round"/></svg>
<div class="t td" style="left:786px;top:596px;color:#555">1</div>
<div class="t td" style="left:816px;top:596px">NV</div>
<div class="t td" style="left:896.6px;top:596px">2021</div>
<div class="t td" style="left:1036px;top:596px;letter-spacing:0.15px">Aug 2, 2024</div>
<div class="a" style="left:448px;top:654px;width:719.5px;height:1px;background:#dcd9e6"></div>

<!-- DEA section -->
<div class="t sec" style="letter-spacing:-0.231px;left:448px;top:681px">DEA License</div>
<svg style="left:1118px;top:684px" width="14" height="14" viewBox="0 0 14 14"><path d="M1 13L1.7 9.9C1.8 9.5 2 9.2 2.3 8.9L9.6 1.6C10.4 0.8 11.7 0.8 12.4 1.6C13.2 2.4 13.2 3.6 12.4 4.4L5.1 11.7C4.8 12 4.5 12.2 4.1 12.3Z M7.6 13H12.8" fill="none" stroke="#4c12ea" stroke-width="1.4" stroke-linecap="round" stroke-linejoin="round"/></svg>
<div class="t edit" style="left:1143px;top:681px">Edit</div>
<div class="a" style="left:448px;top:715.5px;width:719.5px;height:55.5px;border-radius:8px;background:#fff;box-shadow:inset 0 0 0 1px #dedede,0 1px 2px rgba(0,0,0,0.05);overflow:hidden"><div class="a" style="left:0;top:0;width:3px;height:100%;background:#e39c12"></div></div>
<svg style="left:464.5px;top:735px" width="16" height="16" viewBox="0 0 16 16"><circle cx="8" cy="8" r="6.9" fill="none" stroke="#e09c12" stroke-width="1.5"/><path d="M4.8 8H11M8.3 5.3L11 8L8.3 10.7" fill="none" stroke="#e09c12" stroke-width="1.6" stroke-linecap="round" stroke-linejoin="round"/></svg>
<div class="t item" style="letter-spacing:0.161px;left:490px;top:733px;color:#262626">Needs Verification</div>
<div class="a btn" style="left:1096px;top:727.3px;width:59.7px;height:31.3px">Verify</div>

<div class="t th" style="letter-spacing:-0.184px;left:456px;top:795px">DEA License #</div>
<div class="t th" style="left:956px;top:795px">State</div>
<div class="t th" style="letter-spacing:-0.125px;left:1036.4px;top:795px">Year Licensed</div>
<div class="a" style="left:448px;top:826px;width:719.5px;height:1px;background:#e3e3e3"></div>
<div class="a" style="left:456px;top:847px;width:8px;height:8px;border-radius:50%;background:#e39a12"></div>
<div class="t td lnk" style="left:472.3px;top:841px">1194905117</div>
<svg style="left:556.3px;top:846.3px" width="10" height="10" viewBox="0 0 10 10"><path d="M1 9L9 1M2.8 1H9V7.2" fill="none" stroke="#222" stroke-width="1.4" stroke-linecap="round" stroke-linejoin="round"/></svg>
<div class="a badge2" style="left:902px;top:841.2px;width:37.6px"></div>
<svg style="left:909.5px;top:845px" width="11" height="12" viewBox="0 0 11 12"><path d="M9.6 5.2L5.2 9.6C3.9 10.9 2 10.9 1.1 10C0.2 9.1 0.2 7.2 1.5 5.9L6.2 1.2C7 0.4 8.3 0.4 9.1 1.2C9.9 2 9.9 3.3 9.1 4.1L4.6 8.6C4.2 9 3.5 9 3.1 8.6C2.7 8.2 2.7 7.5 3.1 7.1L7 3.2" fill="none" stroke="#5e5e5e" stroke-width="1.3" stroke-linecap="round" stroke-linejoin="round"/></svg>
<div class="t td" style="left:924px;top:841px;color:#555">2</div>
<div class="t td" style="left:956px;top:841px">CA</div>
<div class="t td" style="left:1036.4px;top:841px">2021</div>
<div class="a" style="left:448px;top:874.5px;width:719.5px;height:1px;background:#e3e3e3"></div>

</div>

</div></body></html>
